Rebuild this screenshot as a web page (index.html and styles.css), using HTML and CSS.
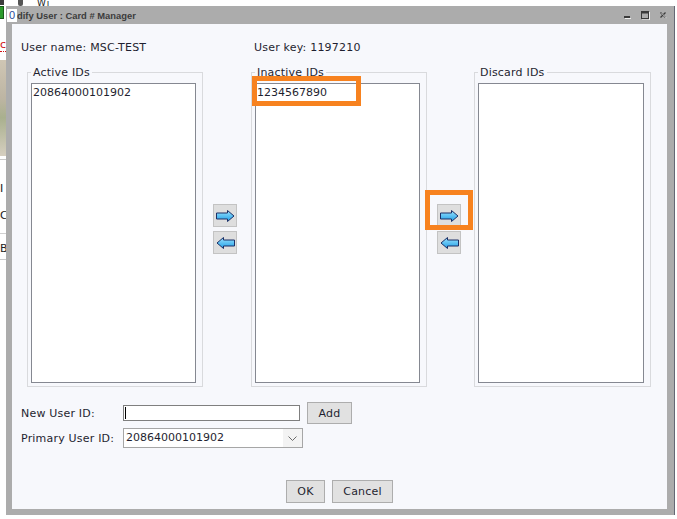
FILE: index.html
```html
<!DOCTYPE html>
<html>
<head>
<meta charset="utf-8">
<link rel="stylesheet" href="styles.css">
</head>
<body>
<div class="page">
  <div class="topbits"><span class="tb tb1"></span><span class="tb tb2"></span><span class="tb tb3">Wi</span></div>
  <div class="leftbits">
    <div class="lb-green"></div>
    <div class="lb-red">c</div>
    <div class="lb-photo"></div>
    <div class="lb-line"></div>
    <div class="lb-txt lb-i">I</div>
    <div class="lb-txt">C</div>
    <div class="lb-line2"></div>
    <div class="lb-txt lb-bi">Bi</div>
    <div class="lb-line"></div>
  </div>

  <div class="dialog">
    <div class="titlebar">
      <span class="t-cursor">0</span><span class="t-text">dify User : Card # Manager</span>
      <span class="t-controls">
        <svg width="7" height="3" viewBox="0 0 7 3"><rect x="0" y="0" width="6" height="2" fill="#3a3a3a"/><rect x="1" y="2" width="6" height="1" fill="#eeeeee"/></svg>
        <svg width="9" height="9" viewBox="0 0 9 9"><rect x="0.5" y="0.5" width="7" height="7" fill="none" stroke="#3a3a3a"/><rect x="1" y="1" width="6" height="1.5" fill="#3a3a3a"/><path d="M8.5 1v8H1" fill="none" stroke="#eeeeee"/></svg>
        <svg width="7" height="7" viewBox="0 0 7 7"><path d="M0.5 0.5l5 5M5.5 0.5l-5 5" stroke="#3a3a3a" stroke-width="1.3"/><path d="M1.5 1.2l5 5" stroke="#e8e8e8" stroke-width="0.8"/></svg>
      </span>
    </div>
    <div class="frame">
      <div class="content">
        <div class="info"><span class="info-name">User name: MSC-TEST</span><span>User key: 1197210</span></div>

        <div class="lists">
          <fieldset class="group">
            <legend>Active IDs</legend>
            <div class="listbox"><div class="item">20864000101902</div></div>
          </fieldset>
          <div class="movers">
            <div class="mv"><svg width="19" height="12" viewBox="0 0 19 12"><defs><linearGradient id="ga" x1="0" y1="0" x2="0" y2="1"><stop offset="0" stop-color="#9be3ff"/><stop offset="1" stop-color="#1e9ee6"/></linearGradient></defs><polygon points="0.5,3 11.5,3 11.5,0.5 18,6 11.5,11.5 11.5,9 0.5,9" fill="url(#ga)" stroke="#1d2f66"/></svg></div>
            <div class="mv"><svg width="19" height="12" viewBox="0 0 19 12"><polygon points="18.5,3 7.5,3 7.5,0.5 1,6 7.5,11.5 7.5,9 18.5,9" fill="url(#ga)" stroke="#1d2f66"/></svg></div>
          </div>
          <fieldset class="group">
            <legend>Inactive IDs</legend>
            <div class="listbox"><div class="item">1234567890</div></div>
          </fieldset>
          <div class="movers movers-2">
            <div class="mv"><svg width="19" height="12" viewBox="0 0 19 12"><polygon points="0.5,3 11.5,3 11.5,0.5 18,6 11.5,11.5 11.5,9 0.5,9" fill="url(#ga)" stroke="#1d2f66"/></svg></div>
            <div class="mv"><svg width="19" height="12" viewBox="0 0 19 12"><polygon points="18.5,3 7.5,3 7.5,0.5 1,6 7.5,11.5 7.5,9 18.5,9" fill="url(#ga)" stroke="#1d2f66"/></svg></div>
          </div>
          <fieldset class="group group-3">
            <legend>Discard IDs</legend>
            <div class="listbox"></div>
          </fieldset>
        </div>

        <div class="form-row">
          <span class="label">New User ID:</span>
          <div class="textbox"><span class="caret"></span></div>
          <div class="btn btn-add">Add</div>
        </div>
        <div class="form-row form-row-2">
          <span class="label">Primary User ID:</span>
          <div class="select">
            <span class="select-value">20864000101902</span>
            <span class="select-arrow"><svg width="9" height="5" viewBox="0 0 9 5"><path d="M0.5 0.5l4 4 4-4" fill="none" stroke="#6a6a6a"/></svg></span>
          </div>
        </div>

        <div class="actions">
          <div class="btn btn-ok">OK</div>
          <div class="btn btn-cancel">Cancel</div>
        </div>
      </div>
    </div>
  </div>

  <div class="mark mark-1"></div>
  <div class="mark mark-2"></div>
</div>
</body>
</html>
```

FILE: styles.css
```css
html, body {
  margin: 0;
  padding: 0;
  background: #ffffff;
}

.page {
  position: relative;
  width: 677px;
  height: 519px;
  overflow: hidden;
  font-family: "DejaVu Sans", Verdana, sans-serif;
  font-size: 11px;
  color: #1f1f30;
}

/* fragments of the page behind the dialog */
.topbits {
  display: flex;
  align-items: flex-start;
  height: 6px;
  overflow: hidden;
}
.tb1 { width: 4px; height: 5px; background: #3d3d3d; margin-left: 0; }
.tb2 { width: 5px; height: 6px; background: #555555; margin-left: 14px; border-radius: 0 0 2px 2px; }
.tb3 { margin-left: 14px; font-size: 9px; line-height: 6px; height: 6px; overflow: hidden; color: #222; letter-spacing: 1px; }

.leftbits {
  width: 6px;
  overflow: hidden;
  display: flex;
  flex-direction: column;
}
.lb-green { width: 3px; height: 11px; background: #2c9a2c; border: 1px solid #1a5a1a; border-left: 0; }
.lb-red { margin-top: 20px; height: 12px; line-height: 12px; color: #d01010; font-size: 11px; border-bottom: 1px dotted #d01010; }
.lb-photo { margin-top: 8px; height: 96px; background: linear-gradient(180deg, #cfc6b4 0%, #bdb5a3 40%, #a9b08e 60%, #d6cfc0 100%); }
.lb-line { height: 1px; background: #c8c8c8; margin-top: 3px; }
.lb-txt { height: 14px; line-height: 14px; font-size: 11px; color: #222; margin-top: 13px; }
.lb-i { margin-top: 22px; }
.lb-line2 { height: 1px; background: #d0d0d0; margin-top: 10px; }
.lb-bi { margin-top: 8px; }

/* dialog window */
.dialog {
  position: absolute;
  left: 6px;
  top: 6px;
  width: 669px;
  height: 509px;
  box-sizing: border-box;
  background: #acacac;
  border-right: 1px solid #646874;
  display: flex;
  flex-direction: column;
}

.titlebar {
  height: 18px;
  display: flex;
  align-items: center;
  padding-left: 1px;
  padding-right: 7px;
  font-family: "Liberation Sans", Arial, sans-serif;
  font-weight: bold;
  font-size: 9.4px;
  color: #3c3c3c;
  flex: none;
}
.t-cursor {
  width: 10px;
  height: 13px;
  background: #ffffff;
  color: #2a4a9a;
  font-weight: normal;
  font-size: 11px;
  line-height: 13px;
  text-align: center;
  margin-top: 1px;
}
.t-text { margin-left: 0; }
.t-controls {
  margin-left: auto;
  display: flex;
  align-items: center;
  gap: 10px;
}
.t-controls svg { display: block; }
.t-controls svg:first-child { margin-top: 4px; }

.frame {
  flex: 1;
  display: flex;
  padding: 0 7px 6px 0;
}

.content {
  flex: 1;
  margin-left: 0;
  background: #f7f8fc;
  padding: 17px 0 0 9px;
  box-sizing: border-box;
  letter-spacing: 0.2px;
}

.frame { padding-left: 6px; }

.info {
  display: flex;
  height: 13px;
  line-height: 13px;
}
.info-name { width: 233px; }

.lists {
  display: flex;
  margin-top: 12px;
  margin-left: 6px;
}

.group {
  margin: 0;
  width: 176px;
  box-sizing: border-box;
  padding: 4px 6px 3px 3px;
  border: 1px solid #d9dadd;
  min-width: 0;
}
.group-3 { width: 177px; }
.group legend {
  padding: 0 2px;
  line-height: 13px;
  font-size: 11px;
}

.listbox {
  height: 300px;
  box-sizing: border-box;
  border: 1px solid #858891;
  background: #ffffff;
  padding: 2px 1px;
}
.item {
  line-height: 13px;
  letter-spacing: 0;
}

.movers {
  width: 48px;
  box-sizing: border-box;
  display: flex;
  flex-direction: column;
  justify-content: center;
  gap: 4px;
  padding-top: 5px;
  padding-left: 10px;
}
.movers-2 { width: 47px; }

.mv {
  width: 24px;
  height: 23px;
  box-sizing: border-box;
  border: 1px solid #c3c3c3;
  background: #dedede;
  display: flex;
  align-items: center;
  justify-content: center;
}
.mv svg { display: block; }

.form-row {
  display: flex;
  align-items: center;
  height: 22px;
  margin-top: 15px;
}
.form-row-2 {
  height: 20px;
  margin-top: 4px;
}
.label {
  width: 102px;
  flex: none;
}
.textbox {
  width: 177px;
  height: 16px;
  box-sizing: border-box;
  border: 1px solid #7f7f7f;
  background: #ffffff;
  display: flex;
  align-items: center;
  padding-left: 1px;
}
.caret {
  width: 1px;
  height: 12px;
  background: #000000;
}

.btn {
  height: 23px;
  box-sizing: border-box;
  border: 1px solid #adadad;
  background: #e1e1e1;
  display: flex;
  align-items: center;
  justify-content: center;
  line-height: 13px;
}
.btn-add {
  width: 45px;
  height: 22px;
  margin-left: 7px;
}

.select {
  width: 180px;
  height: 20px;
  box-sizing: border-box;
  border: 1px solid #a6a6a6;
  background: #ffffff;
  display: flex;
  align-items: stretch;
}
.select-value {
  flex: 1;
  padding-left: 2px;
  line-height: 18px;
  letter-spacing: 0;
}
.select-arrow {
  width: 19px;
  background: #f3f3f3;
  display: flex;
  align-items: center;
  justify-content: center;
}
.select-arrow svg { display: block; }

.actions {
  display: flex;
  justify-content: center;
  gap: 7px;
  margin-top: 32px;
  padding-right: 9px;
}
.btn-ok { width: 39px; }
.btn-cancel { width: 61px; }

/* orange annotation boxes over the screenshot */
.mark {
  position: absolute;
  box-sizing: border-box;
  border: 5px solid #f7821f;
}
.mark-1 { left: 252px; top: 76px; width: 109px; height: 30px; }
.mark-2 { left: 425px; top: 190px; width: 48px; height: 40px; }
```
